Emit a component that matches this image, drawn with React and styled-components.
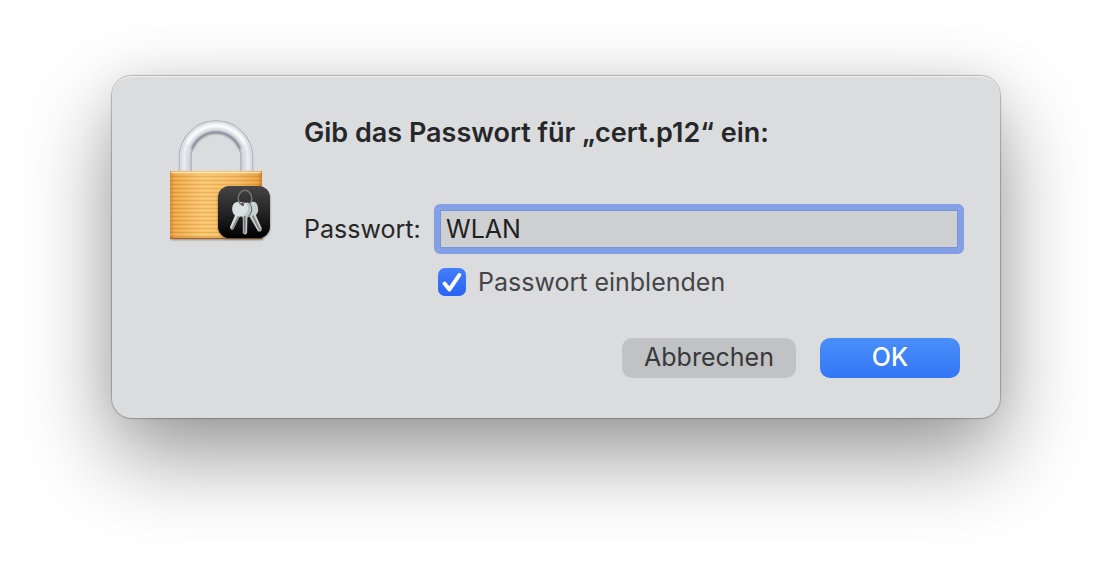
import React, { useState } from 'react'
import styled, { createGlobalStyle } from 'styled-components'

const GlobalStyle = createGlobalStyle`
  * {
    box-sizing: border-box;
  }
  body {
    margin: 0;
    background: #fff;
    color: #262729;
    font-family: Inter, 'Liberation Sans', sans-serif;
    font-size: 25px;
    line-height: 32px;
  }
  button, input {
    font: inherit;
    color: inherit;
  }
`

const Page = styled.main`
  min-height: 100vh;
  padding: 76px 112px;
  overflow: hidden;
`

const Dialog = styled.form`
  display: flex;
  align-items: flex-start;
  gap: 20px;
  padding: 40px 40px 40px 44px;
  border-radius: 20px;
  background: #dbdcde;
  box-shadow:
    inset 0 1px 0 #f0f0f0,
    0 0 1px 1px rgba(0, 0, 0, 0.24),
    0 36px 88px 0 rgba(0, 0, 0, 0.42),
    0 0 40px 0 rgba(0, 0, 0, 0.05);
`

const Content = styled.div`
  flex: 1;
  min-width: 0;
`

const Title = styled.h1`
  margin: 0 0 58px;
  font-size: 27px;
  line-height: 34px;
  font-weight: 600;
`

const Fields = styled.div`
  display: grid;
  grid-template-columns: 118px 1fr;
  align-items: center;
  gap: 18px 16px;
`

const TextField = styled.input`
  width: 100%;
  min-width: 0;
  height: 42px;
  padding: 0 6px;
  border: 2px solid #839fe6;
  border-radius: 2px;
  background: #cecfd0;
  box-shadow: inset 0 0 0 1px #7594da;
  outline: 4px solid #839fe6;
  color: #1f2021;
`

const CheckRow = styled.div`
  grid-column: 2;
  display: flex;
  align-items: center;
  gap: 12px;
  height: 28px;
  color: #444547;
`

const CheckMark = styled.svg`
  grid-area: 1 / 1;
  pointer-events: none;
`

const CheckWrap = styled.span`
  display: grid;
  width: 28px;
  height: 28px;
`

const Checkbox = styled.input`
  grid-area: 1 / 1;
  appearance: none;
  width: 28px;
  height: 28px;
  margin: 0;
  border-radius: 7px;
  background: #c4c5c7;
  &:checked {
    background: linear-gradient(#427ff8, #2a63f5);
  }
`

const Actions = styled.div`
  display: flex;
  justify-content: flex-end;
  gap: 24px;
  margin-top: 42px;
`

const Button = styled.button`
  width: ${props => props.$primary ? '140px' : '174px'};
  height: 40px;
  padding: 0 0 2px;
  border: 0;
  border-radius: 10px;
  background: ${props => props.$primary ? 'linear-gradient(#4a8ff8, #3276f6)' : '#c1c2c4'};
  color: ${props => props.$primary ? '#fff' : '#38393a'};
  font-weight: ${props => props.$primary ? 500 : 400};
`

const LockIcon = () => (
  <svg width="128" height="128" viewBox="0 0 128 128" aria-hidden="true">
    <defs>
      <linearGradient id="brass" x1="0" y1="0" x2="1" y2="0">
        <stop offset="0" stopColor="#d58b32" />
        <stop offset="0.06" stopColor="#eeaa4c" />
        <stop offset="0.35" stopColor="#f9c672" />
        <stop offset="0.7" stopColor="#f6bc64" />
        <stop offset="0.95" stopColor="#e9a244" />
        <stop offset="1" stopColor="#c97e2a" />
      </linearGradient>
      <linearGradient id="steel" x1="0" y1="0" x2="0" y2="1">
        <stop offset="0" stopColor="#dcdfe3" />
        <stop offset="1" stopColor="#d6dae2" />
      </linearGradient>
      <linearGradient id="tile" x1="0" y1="0" x2="0" y2="1">
        <stop offset="0" stopColor="#444" />
        <stop offset="0.5" stopColor="#252525" />
        <stop offset="1" stopColor="#000" />
      </linearGradient>
      <pattern id="brushed" width="92" height="4" patternUnits="userSpaceOnUse">
        <rect width="92" height="1" fill="#b86f16" opacity="0.26" />
        <rect y="2" width="92" height="1" fill="#ffe09a" opacity="0.2" />
      </pattern>
      <filter id="soft" x="-20%" y="-20%" width="140%" height="140%">
        <feGaussianBlur stdDeviation="1.2" />
      </filter>
    </defs>
    <g fill="none">
      <path d="M29.2 56V41.5a30.8 30.8 0 0 1 61.6 0V56" stroke="#a2a8b0" strokeWidth="12.8" />
      <path d="M29.2 56V41.5a30.8 30.8 0 0 1 61.6 0V56" stroke="url(#steel)" strokeWidth="11.2" />
      <path d="M34.3 55V41.5a25.7 25.7 0 0 1 51.4 0V55" stroke="#b9bfca" strokeWidth="1.2" />
      <path d="M36 33a25.7 25.7 0 0 1 48 0" stroke="#7f8691" strokeWidth="2.4" filter="url(#soft)" />
      <path d="M28.2 54V41.5a31.8 31.8 0 0 1 63.6 0V54" stroke="#eff1f5" strokeWidth="3" filter="url(#soft)" />
      <path d="M31 28a32 32 0 0 1 58 0" stroke="#fff" strokeWidth="2.6" filter="url(#soft)" />
    </g>
    <rect x="15" y="117" width="92" height="7" fill="#50504f" opacity="0.55" filter="url(#soft)" />
    <rect x="14" y="55" width="92" height="68" rx="1" fill="url(#brass)" />
    <rect x="14" y="59" width="92" height="63" fill="url(#brushed)" />
    <path d="M15 56.5h90" stroke="#ffe7b3" strokeWidth="1.6" />
    <path d="M14 122.4h92" stroke="#a76220" strokeWidth="1.2" />
    <rect x="62" y="71" width="52" height="52" rx="12" opacity="0.4" filter="url(#soft)" />
    <rect x="62" y="70" width="52" height="52" rx="11.5" fill="url(#tile)" />
    <ellipse cx="89" cy="82.5" rx="6.8" ry="8.2" fill="none" stroke="#777571" strokeWidth="1.5" />
    <path d="M95.5 86c3-1 5 .5 5.800 3 .9 2.600 1.200 5.500.4 7.500l-1.800 2.800 5.800 13-.6 3-3 .2-8.600-15-2.500-4z" fill="#c9d2d3" />
    <path d="M96.500 99.500l7.600 15" stroke="#8d8a83" strokeWidth="2" />
    <path d="M89.500 86.500c4-.5 6.500 1.500 7 5 .4 3.200-.4 6.800-2.800 8.700l-2.300 1.300-.3 15.500-2 1.800-2.300-1.800v-15l-3.600-4.500z" fill="#bdc8ca" />
    <path d="M88.600 100v17" stroke="#77736c" strokeWidth="1.7" />
    <path d="M93 87.500c4 3.200 3.200 9-.4 12.700" fill="none" stroke="#5f5d59" strokeWidth="1" />
    <path d="M78.500 87c3-2.200 9-1.600 11.700.7 2.300 2 2.200 5.600.6 8.600-1.500 2.500-4 4.400-7.300 4.500l-6.200 12.400-2.500.3-.8-2.500 5-11.600c-3.400-2.800-3.900-9.500-.5-12.400z" fill="#d7e1e2" />
    <path d="M82.500 100.500l-6.500 13" stroke="#8b8981" strokeWidth="1.8" />
    <path d="M82.500 83.500c.6 4 2.500 5.700 5.500 5.900" fill="none" stroke="#6e6963" strokeWidth="1.5" />
    <circle cx="86.500" cy="88" r="1.400" fill="#4f4b47" />
  </svg>
)

const App = () => {
  const [password, setPassword] = useState('WLAN')
  const [visible, setVisible] = useState(true)

  return (
    <>
      <GlobalStyle />
      <Page>
        <Dialog role="dialog" aria-labelledby="title" onSubmit={e => e.preventDefault()}>
          <LockIcon />
          <Content>
            <Title id="title">Gib das Passwort für „cert.p12“ ein:</Title>
            <Fields>
              <label htmlFor="password">Passwort:</label>
              <TextField
                id="password"
                type={visible ? 'text' : 'password'}
                value={password}
                onChange={e => setPassword(e.target.value)}
              />
              <CheckRow>
                <CheckWrap>
                  <Checkbox
                    id="visible"
                    type="checkbox"
                    checked={visible}
                    onChange={e => setVisible(e.target.checked)}
                  />
                  {visible && (
                    <CheckMark width="28" height="28" viewBox="0 0 28 28" aria-hidden="true">
                      <path d="M6.5 15.5l5 6L21.3 7" fill="none" stroke="#fff" strokeWidth="4" strokeLinecap="round" strokeLinejoin="round" />
                    </CheckMark>
                  )}
                </CheckWrap>
                <label htmlFor="visible">Passwort einblenden</label>
              </CheckRow>
            </Fields>
            <Actions>
              <Button type="button">Abbrechen</Button>
              <Button type="submit" $primary>OK</Button>
            </Actions>
          </Content>
        </Dialog>
      </Page>
    </>
  )
}

export default App
